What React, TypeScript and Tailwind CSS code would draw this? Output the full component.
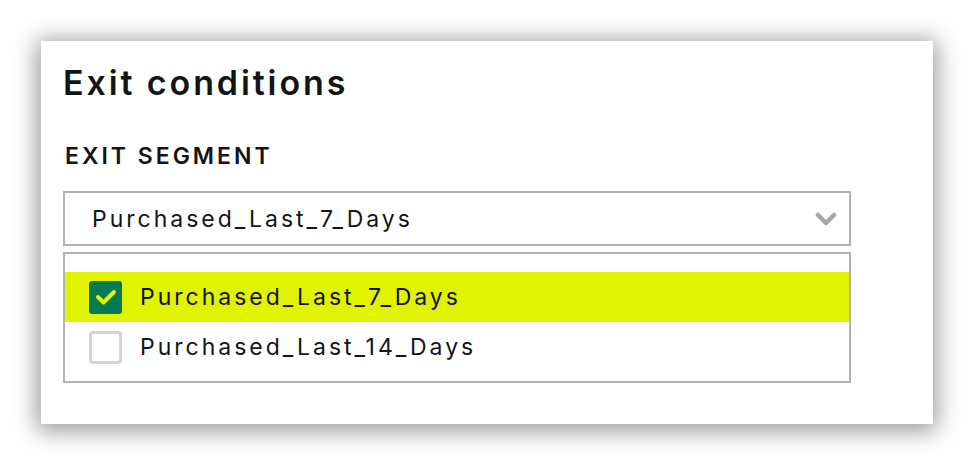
import React from "react";

const FONT = { fontFamily: "Inter, 'Noto Sans', sans-serif" };

function Chevron() {
  return (
    <svg width="22" height="14" viewBox="0 0 22 14" fill="none">
      <path d="M3 3l8 8 8-8" stroke="#a6a6a6" strokeWidth="4.5" strokeLinecap="round" strokeLinejoin="round" />
    </svg>
  );
}

function Box({ checked }: { checked: boolean }) {
  if (checked) {
    return (
      <div className="flex h-[33px] w-[33px] shrink-0 items-center justify-center rounded-[3px] bg-[#087955]">
        <svg width="22" height="18" viewBox="0 0 22 18" fill="none">
          <path d="M3 9l5.5 5.5L19 4" stroke="#e2f400" strokeWidth="4" strokeLinecap="round" strokeLinejoin="round" />
        </svg>
      </div>
    );
  }
  return <div className="h-[33px] w-[33px] shrink-0 rounded-[4px] border-[3px] border-[#d4d4d4] bg-white" />;
}

const options = [
  { label: "Purchased_Last_7_Days", checked: true },
  { label: "Purchased_Last_14_Days", checked: false },
];

export default function App() {
  return (
    <div className="h-[475px] w-[976px] bg-white pl-[41px] pt-[41px]" style={FONT}>
      <div className="h-[383px] w-[892px] bg-white px-[22px] pt-[18px] shadow-[0_3px_22px_4px_rgba(0,0,0,0.4)]">
        <h1 className="text-[34px] font-semibold leading-[48px] tracking-[0.085em] text-[#141414]">Exit conditions</h1>
        <div className="mt-[34px] pl-[2px] text-[23px] font-semibold leading-[30px] tracking-[0.13em] text-[#141414]">
          EXIT SEGMENT
        </div>

        <div className="mt-[20px] flex h-[55px] w-[788px] items-center justify-between border-2 border-[#b2b2b2] pl-[27px] pr-[12px]">
          <span className="text-[23px] leading-[30px] tracking-[0.13em] text-[#141414]">Purchased_Last_7_Days</span>
          <Chevron />
        </div>

        <div className="mt-[6px] h-[131px] w-[788px] border-2 border-[#b2b2b2] pt-[18px]">
          {options.map((o) => (
            <div
              key={o.label}
              className={`flex h-[50px] items-center gap-[18px] pl-[24px] ${o.checked ? "bg-[#e0f300]" : ""}`}
            >
              <Box checked={o.checked} />
              <span className="text-[23px] leading-[30px] tracking-[0.13em] text-[#141414]">{o.label}</span>
            </div>
          ))}
        </div>
      </div>
    </div>
  );
}
